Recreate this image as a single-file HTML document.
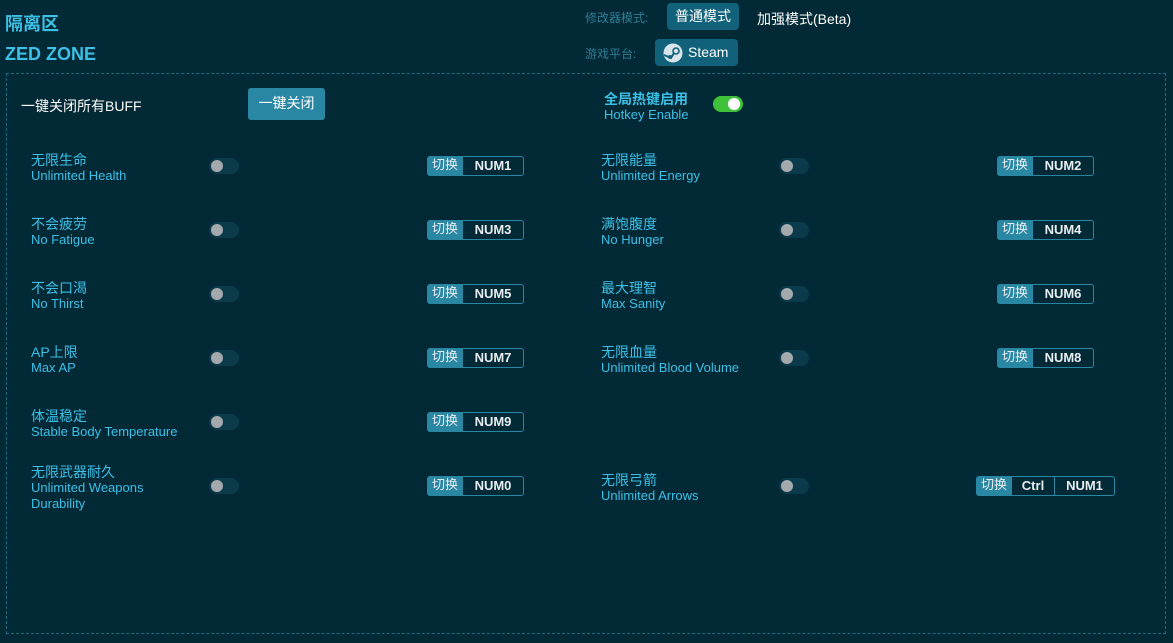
<!DOCTYPE html>
<html><head><meta charset="utf-8"><style>
*{margin:0;padding:0;box-sizing:border-box}
body{width:1173px;height:643px;background:#022936;font-family:"Liberation Sans","Noto Sans CJK SC",sans-serif;position:relative;overflow:hidden;color:#fff}
.a{position:absolute;white-space:nowrap}
.cy{color:#3cc0e6}
.box{position:absolute;left:6px;top:73px;width:1160px;height:561px;border:1px dashed #1e6c82}
.tg{position:absolute;width:30px;height:16px;border-radius:8px;background:#0b3a4a}
.tg i{position:absolute;left:2px;top:2px;width:12px;height:12px;border-radius:50%;background:#a3a9ad}
.key{position:absolute;height:20px;border:1px solid #2a87a3;border-radius:3px;display:flex;font-size:13px;font-weight:bold;color:#e8eef0;line-height:18px}
.key span{display:flex;align-items:center;justify-content:center;border-left:1px solid #2a87a3}
.key span:first-child{background:#2a87a3;border:none;width:34px;font-weight:normal;padding-bottom:2px}
.cn{font-size:14px}.en{font-size:13px}
</style></head><body>
<div class="a cy" style="left:5px;top:10px;font-size:18px;font-weight:bold">隔离区</div>
<div class="a cy" style="left:5px;top:44px;font-size:18px;font-weight:bold">ZED ZONE</div>
<div class="a" style="left:585px;top:9px;font-size:12px;color:#2f7e94">修改器模式:</div>
<div class="a" style="left:667px;top:3px;width:72px;height:27px;background:#12617a;border-radius:4px;font-size:14px;line-height:27px;text-align:center">普通模式</div>
<div class="a" style="left:757px;top:9px;font-size:14px">加强模式(Beta)</div>
<div class="a" style="left:585px;top:45px;font-size:12px;color:#2f7e94">游戏平台:</div>
<div class="a" style="left:655px;top:39px;width:83px;height:27px;background:#12617a;border-radius:4px;font-size:14px;line-height:27px;padding-left:33px">Steam</div>
<svg class="a" style="left:663px;top:43px" width="20" height="20" viewBox="0 0 20 20"><circle cx="10" cy="10" r="9.5" fill="#d8e4ea"/><circle cx="13" cy="8" r="3" fill="none" stroke="#12617a" stroke-width="1.6"/><path d="M1 12 L8 15 L11 10" stroke="#12617a" stroke-width="2" fill="none"/><circle cx="7" cy="14" r="2" fill="#12617a"/></svg>
<div class="box"></div>
<div class="a" style="left:21px;top:96px;font-size:14px">一键关闭所有BUFF</div>
<div class="a" style="left:248px;top:88px;width:77px;height:32px;background:#2a87a3;border-radius:3px;font-size:14px;line-height:30px;text-align:center">一键关闭</div>
<div class="a cy" style="left:604px;top:89px;font-size:14px;font-weight:bold">全局热键启用</div>
<div class="a cy" style="left:604px;top:107px;font-size:13px">Hotkey Enable</div>
<div class="a" style="left:713px;top:96px;width:30px;height:16px;border-radius:8px;background:#3fc23a"><i style="position:absolute;right:3px;top:2px;width:12px;height:12px;border-radius:50%;background:#fff"></i></div>

<div id="rows"></div>
<script>
var L=[["无限生命","Unlimited Health","NUM1"],["不会疲劳","No Fatigue","NUM3"],["不会口渴","No Thirst","NUM5"],["AP上限","Max AP","NUM7"],["体温稳定","Stable Body Temperature","NUM9"],["无限武器耐久","Unlimited Weapons<br>Durability","NUM0"]];
var R=[["无限能量","Unlimited Energy","NUM2"],["满饱腹度","No Hunger","NUM4"],["最大理智","Max Sanity","NUM6"],["无限血量","Unlimited Blood Volume","NUM8"],null,["无限弓箭","Unlimited Arrows",null]];
var h="";
for(var i=0;i<6;i++){var y=158+i*64;
 var l=L[i];var ly=i==5?y-8:y;
 h+='<div class="a cy cn" style="left:31px;top:'+(ly-8)+'px">'+l[0]+'</div><div class="a cy en" style="left:31px;top:'+(ly+10)+'px;line-height:16px">'+l[1]+'</div>';
 h+='<div class="tg" style="left:209px;top:'+y+'px"><i></i></div>';
 h+='<div class="key" style="left:427px;top:'+(y-2)+'px;width:97px"><span>切换</span><span style="flex:1">'+l[2]+'</span></div>';
 var r=R[i];if(r){
 h+='<div class="a cy cn" style="left:601px;top:'+(y-8)+'px">'+r[0]+'</div><div class="a cy en" style="left:601px;top:'+(y+10)+'px">'+r[1]+'</div>';
 h+='<div class="tg" style="left:779px;top:'+y+'px"><i></i></div>';
 if(r[2])h+='<div class="key" style="left:997px;top:'+(y-2)+'px;width:97px"><span>切换</span><span style="flex:1">'+r[2]+'</span></div>';
 else h+='<div class="key" style="left:976px;top:'+(y-2)+'px;width:139px"><span>切换</span><span style="width:43px">Ctrl</span><span style="flex:1">NUM1</span></div>';}
}
document.getElementById("rows").innerHTML=h;
</script>
</body></html>
